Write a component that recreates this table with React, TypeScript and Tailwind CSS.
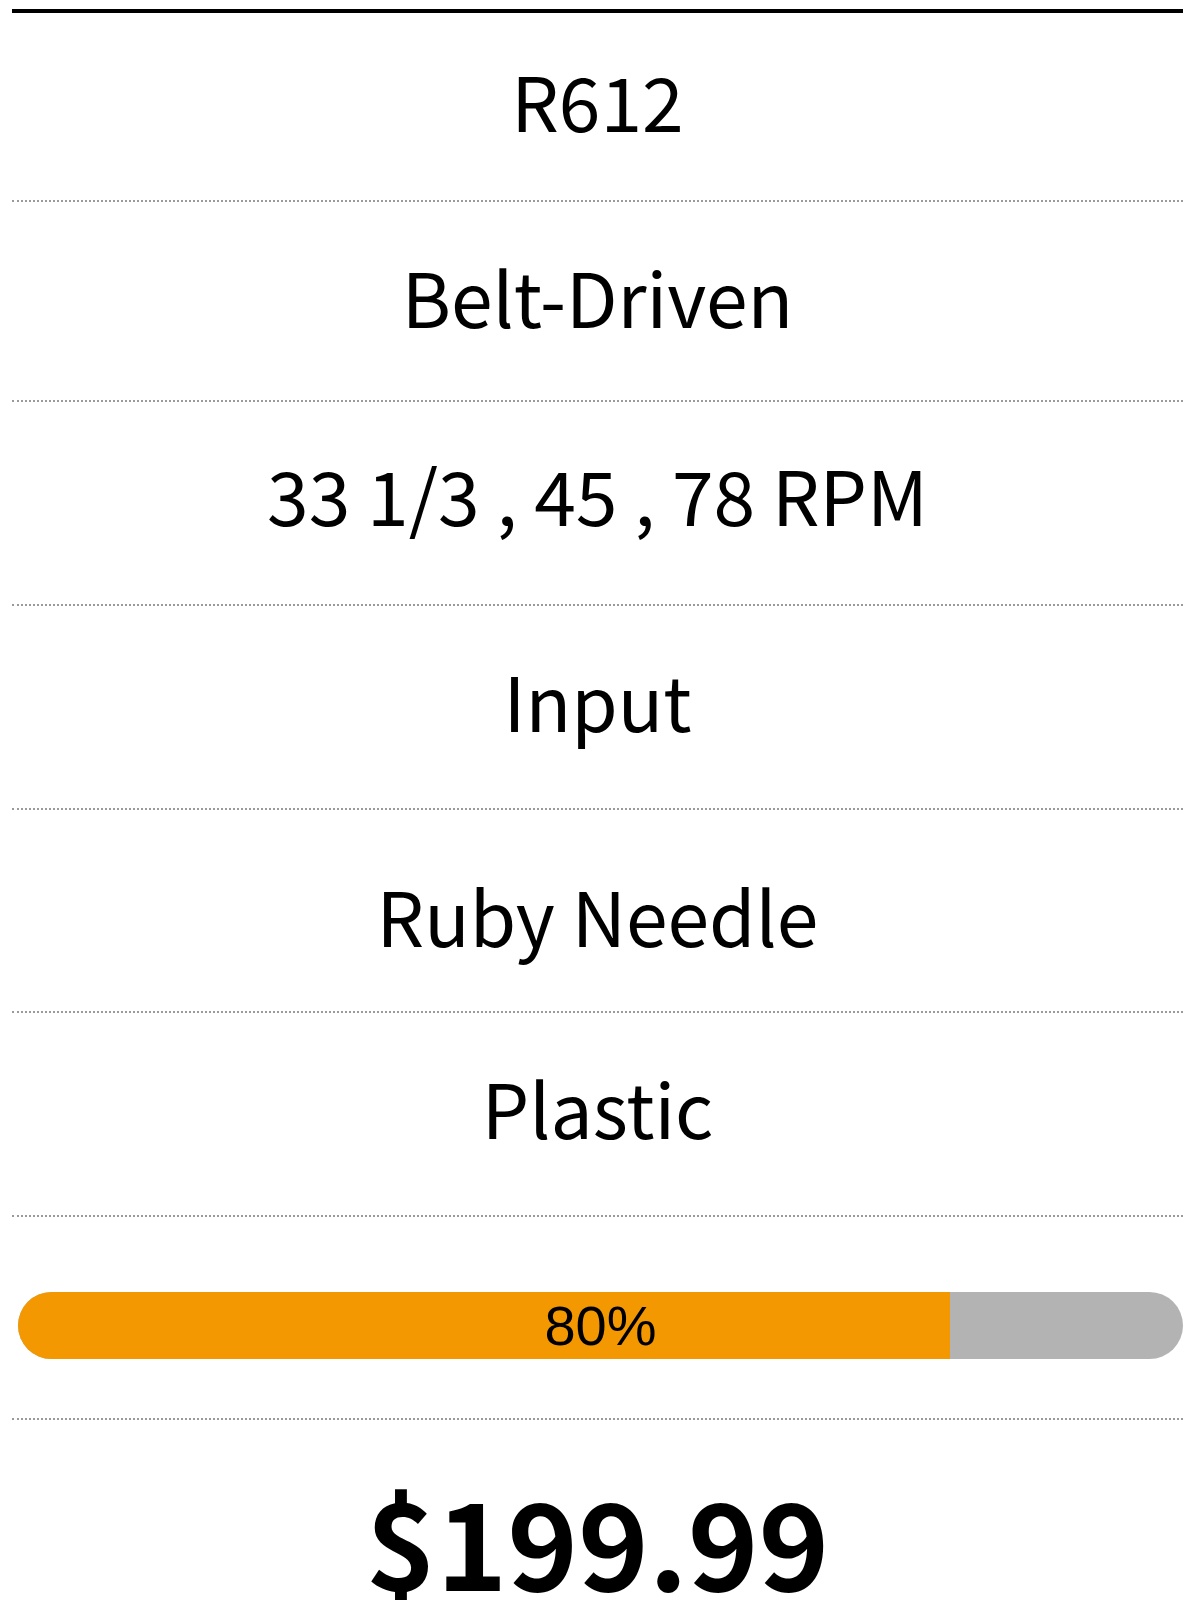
import React from "react";

const specs = [
  { label: "R612", h: "h-[189px]", nudge: "mb-[14px]" },
  { label: "Belt-Driven", h: "h-[200px]", nudge: "mb-[12px]" },
  { label: "33 1/3 , 45 , 78 RPM", h: "h-[204px]", nudge: "mb-[20px]" },
  { label: "Input", h: "h-[204px]", nudge: "mb-[16px]" },
  { label: "Ruby Needle", h: "h-[203px]", nudge: "mt-[8px]" },
  { label: "Plastic", h: "h-[204px]", nudge: "mb-[16px]" },
];

const percent = 80;

export default function App() {
  return (
    <div className="min-h-[1600px] overflow-hidden bg-white pt-[9px] text-black">
      <div
        className="ml-[12px] w-[1171px] border-t-4 border-black"
        style={{ fontFamily: '"Noto Sans CJK SC", "Noto Sans", sans-serif' }}
      >
        {specs.map((s) => (
          <div
            key={s.label}
            className={`${s.h} flex items-center justify-center border-b-2 border-dotted border-[#9a9a9a]`}
          >
            <span className={`${s.nudge} text-[75px] leading-none`}>{s.label}</span>
          </div>
        ))}

        <div className="h-[203px] border-b-2 border-dotted border-[#9a9a9a] pl-[6px] pt-[75px]">
          <div className="relative h-[67px] w-full overflow-hidden rounded-full bg-[#b3b3b3]">
            <div className="h-full bg-[#f39800]" style={{ width: `${percent}%` }} />
            <div
              className="absolute inset-0 flex items-center justify-center text-[56px] leading-none"
              style={{ fontFamily: '"Liberation Sans", Arial, sans-serif' }}
            >
              {percent}%
            </div>
          </div>
        </div>

        <div className="flex justify-center pt-[59px]">
          <span className="text-[120px] font-bold leading-none">$199.99</span>
        </div>
      </div>
    </div>
  );
}
